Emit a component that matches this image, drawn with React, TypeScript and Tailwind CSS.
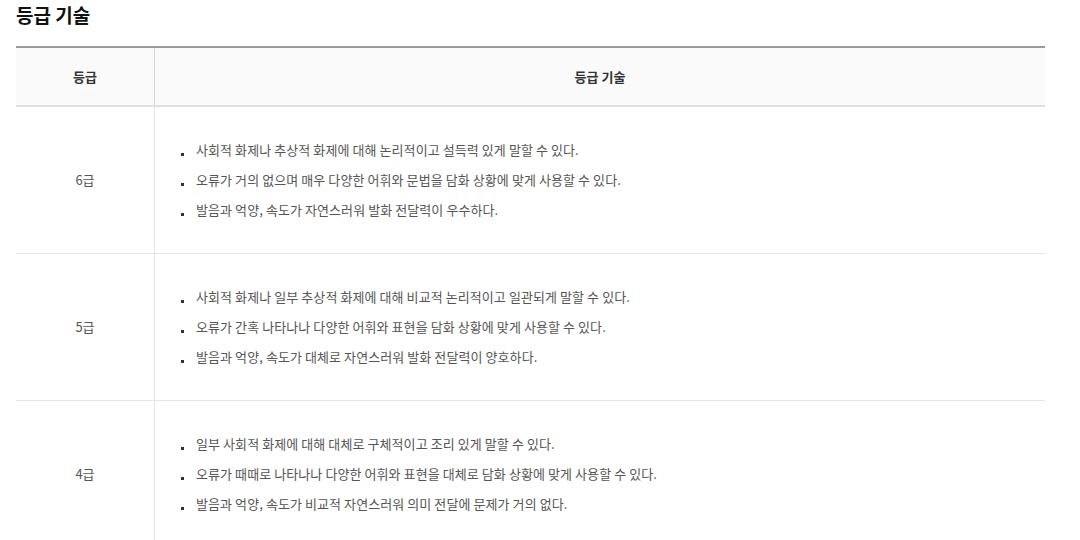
import React from "react";

const rows = [
  {
    grade: "6급",
    items: [
      "사회적 화제나 추상적 화제에 대해 논리적이고 설득력 있게 말할 수 있다.",
      "오류가 거의 없으며 매우 다양한 어휘와 문법을 담화 상황에 맞게 사용할 수 있다.",
      "발음과 억양, 속도가 자연스러워 발화 전달력이 우수하다.",
    ],
  },
  {
    grade: "5급",
    items: [
      "사회적 화제나 일부 추상적 화제에 대해 비교적 논리적이고 일관되게 말할 수 있다.",
      "오류가 간혹 나타나나 다양한 어휘와 표현을 담화 상황에 맞게 사용할 수 있다.",
      "발음과 억양, 속도가 대체로 자연스러워 발화 전달력이 양호하다.",
    ],
  },
  {
    grade: "4급",
    items: [
      "일부 사회적 화제에 대해 대체로 구체적이고 조리 있게 말할 수 있다.",
      "오류가 때때로 나타나나 다양한 어휘와 표현을 대체로 담화 상황에 맞게 사용할 수 있다.",
      "발음과 억양, 속도가 비교적 자연스러워 의미 전달에 문제가 거의 없다.",
    ],
  },
];

export default function App() {
  return (
    <div
      className="bg-white min-h-[540px] px-4 pt-[2px]"
      style={{ fontFamily: '"Noto Sans CJK KR", "Noto Sans", sans-serif' }}
    >
      <h2 className="text-[19px] font-bold text-[#111] leading-[26px]">등급 기술</h2>

      <div className="mt-[18px] w-[1029px] border-t-2 border-[#999]">
        <div className="flex bg-[#fafafa] border-b-2 border-[#e0e0e0] h-[59px]">
          <div className="w-[139px] flex items-center justify-center text-[13px] font-bold text-[#333] border-r border-[#d5d5d5]">
            등급
          </div>
          <div className="flex-1 flex items-center justify-center text-[13px] font-bold text-[#333]">
            등급 기술
          </div>
        </div>

        {rows.map((row) => (
          <div key={row.grade} className="flex border-b border-[#e5e5e5]">
            <div className="w-[139px] flex items-center justify-center text-[13px] text-[#555] border-r border-[#e5e5e5]">
              {row.grade}
            </div>
            <ul className="flex-1 py-[28px] pl-[26px]">
              {row.items.map((item) => (
                <li
                  key={item}
                  className="flex items-center h-[30px] text-[13px] text-[#555] tracking-[0.08px]"
                >
                  <span className="w-[3px] h-[3px] bg-[#333] mt-[8px] mr-[12px] shrink-0" />
                  {item}
                </li>
              ))}
            </ul>
          </div>
        ))}
      </div>
    </div>
  );
}
